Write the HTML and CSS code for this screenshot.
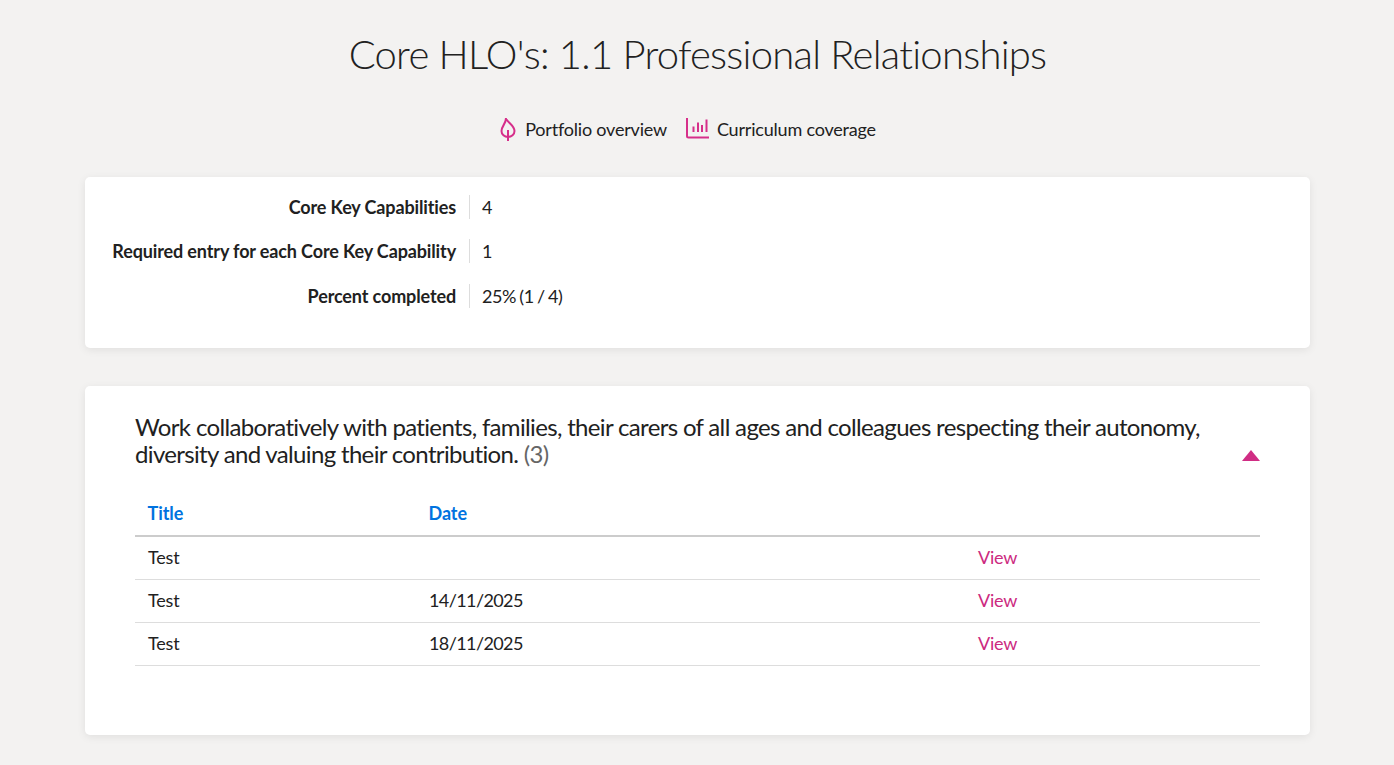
FILE: index.html
```html
<!DOCTYPE html>
<html lang="en">
<head>
<meta charset="utf-8">
<title>Core HLO's</title>
<link rel="stylesheet" href="styles.css">
</head>
<body>
<main class="page">
  <h1 class="title">Core HLO's: 1.1 Professional Relationships</h1>
  <nav class="links">
    <a class="link"><svg class="icon" width="18" height="26" viewBox="0 0 18 26" fill="none" stroke="#d62f8a" stroke-width="2"><path d="M7 2C7.500 6 15.500 9 15.500 15c0 3.600-3 6-6.500 6s-6.500-2.400-6.500-6C2.500 10 7 8 7 2Z"/><path d="M9 25V14"/></svg><span>Portfolio overview</span></a>
    <a class="link chart"><svg class="icon" width="23" height="21" viewBox="0 0 23 21" fill="none" stroke="#d62f8a" stroke-width="2"><path d="M1 0v18q0 1.500 1.500 1.500H23"/><path d="M7.500 14V8.500M12 14V4.500M16 14V7M20.500 14V1.500"/></svg><span>Curriculum coverage</span></a>
  </nav>
  <section class="card summary">
    <dl class="facts">
      <dt>Core Key Capabilities</dt><dd>4</dd>
      <dt>Required entry for each Core Key Capability</dt><dd>1</dd>
      <dt>Percent completed</dt><dd>25% (1 / 4)</dd>
    </dl>
  </section>
  <section class="card detail">
    <div class="head">
      <h2 class="desc">Work collaboratively with patients, families, their carers of all ages and colleagues respecting their autonomy, diversity and valuing their contribution. <span class="count">(3)</span></h2>
      <span class="caret"></span>
    </div>
    <table class="entries">
      <thead><tr><th class="c1">Title</th><th class="c2">Date</th><th></th></tr></thead>
      <tbody>
        <tr><td>Test</td><td></td><td><a class="view">View</a></td></tr>
        <tr><td>Test</td><td class="num">14/11/2025</td><td><a class="view">View</a></td></tr>
        <tr><td>Test</td><td class="num">18/11/2025</td><td><a class="view">View</a></td></tr>
      </tbody>
    </table>
  </section>
</main>
</body>
</html>
```
FILE: styles.css
```css
* { box-sizing: border-box; }
html, body { margin: 0; height: 100%; overflow: hidden; }
body { background: #f3f2f1; color: #212121; font-family: Lato, sans-serif; font-size: 18px; letter-spacing: -.2px; }
.page { padding: 0 84px 0 85px; }
.title { margin: 0; padding-top: 29px; height: 100px; text-align: center; font-weight: 300; font-size: 40px; line-height: 50px; letter-spacing: -.75px; color: #212121; }
.links { display: flex; justify-content: center; align-items: center; gap: 18px; height: 59px; padding-right: 20px; }
.link { display: flex; align-items: center; gap: 8px; margin-top: -2px; }
.chart { gap: 8px; margin-left: 1px; }
.card { background: #fff; border-radius: 5px; box-shadow: 0 2px 8px rgba(0,0,0,.08); }
.summary { margin-top: 18px; height: 171px; padding: 18px 0 0 0; }
.facts { display: grid; grid-template-columns: 385px 1fr; margin: 0; row-gap: 20.400px; }
.facts dt { font-weight: 700; text-align: right; padding-right: 13px; line-height: 24px; border-right: 1px solid #ddd; height: 24px; letter-spacing: -.13px; }
.facts dd { margin: 0; padding-left: 12px; line-height: 24px; letter-spacing: -.45px; word-spacing: -.8px; }
.detail { margin-top: 38px; height: 349px; padding: 27px 50px 0; }
.head { display: flex; align-items: flex-end; justify-content: space-between; }
.desc { margin: 0; font-weight: 400; font-size: 24px; line-height: 27px; letter-spacing: -.66px; flex: 0 0 1075px; }
.count { color: #666; }
.caret { width: 0; height: 0; border-left: 9px solid transparent; border-right: 9px solid transparent; border-bottom: 11px solid #d02d84; margin-bottom: 6px; }
.entries { width: 100%; border-collapse: collapse; margin-top: 25px; table-layout: fixed; }
.entries th { text-align: left; color: #0073e0; font-weight: 700; height: 44px; padding: 0 13px 2px 12.600px; border-bottom: 2px solid #ccc; letter-spacing: -.1px; }
.entries td { height: 43px; padding: 0 13px 2px; border-bottom: 1px solid #ddd; }
.entries .num { letter-spacing: -.6px; }
.c1 { width: 281px; }
.c2 { width: 549px; }
.view { color: #cc2a7f; }
```
